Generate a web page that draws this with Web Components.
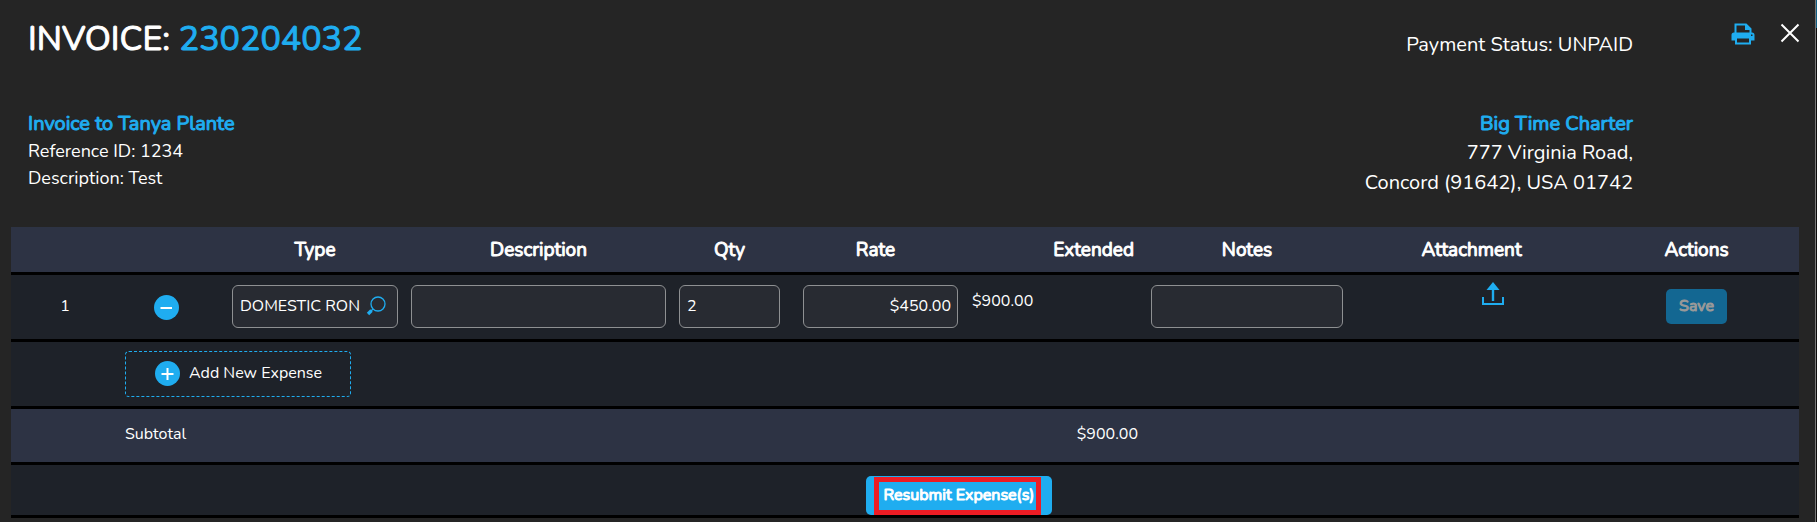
<!DOCTYPE html>
<html lang="en">
<head>
<meta charset="UTF-8">
<title>Invoice 230204032</title>
<style>
    body {
        margin: 0;
        background: linear-gradient(#0f5f85 28px, #0b0b0b 28px);
        color: #fff;
        font-family: Nunito, Lato, sans-serif;
        font-size: 16px;
        --accent: #1fadf0;
    }
</style>
</head>
<body>
<invoice-panel>
    <invoice-header slot="header" number="230204032" status="UNPAID"></invoice-header>
    <invoice-party slot="parties" heading="Invoice to Tanya Plante">
        <div>Reference ID: 1234</div>
        <div>Description: Test</div>
    </invoice-party>
    <invoice-party slot="parties" heading="Big Time Charter" align="right">
        <div>777 Virginia Road,</div>
        <div>Concord (91642), USA 01742</div>
    </invoice-party>
    <expense-table></expense-table>
</invoice-panel>

<script>
const ICONS = {
    print: `<svg width="24" height="22" viewBox="0 0 24 22" fill="none">
        <path d="M4.500 10V1.500H15L19.500 6V10" stroke="currentColor" stroke-width="2"/>
        <path d="M14 1L20 7H14Z" fill="currentColor"/>
        <path fill="currentColor" fill-rule="evenodd" d="M3 9.500H21Q23.500 9.500 23.500 12V17.500H.500V12Q.500 9.500 3 9.500ZM20 11.500V13H21.500V11.500Z"/>
        <path d="M5 14.500H19V20.500H5Z" stroke="currentColor" stroke-width="2" fill="#252525"/>
    </svg>`,
    close: `<svg width="20" height="20" viewBox="0 0 20 20" fill="none">
        <path d="M1.500 1.500L18.500 18.500M18.500 1.500L1.500 18.500" stroke="currentColor" stroke-width="2"/>
    </svg>`,
    search: `<svg width="20" height="20" viewBox="0 0 20 20" fill="none">
        <circle cx="12" cy="8" r="7" stroke="currentColor" stroke-width="1.300"/>
        <path d="M6.800 13.200L5 15" stroke="currentColor" stroke-width="1.300"/>
        <path d="M5.500 14.500L2 18" stroke="currentColor" stroke-width="3.400"/>
    </svg>`,
    minus: `<svg width="25" height="25" viewBox="0 0 25 25">
        <circle cx="12.500" cy="12.500" r="12.500" fill="currentColor"/>
        <path d="M6.500 13H18" stroke="#fff" stroke-width="2"/>
    </svg>`,
    plus: `<svg width="25" height="25" viewBox="0 0 25 25">
        <circle cx="12.500" cy="12.500" r="12.500" fill="currentColor"/>
        <path d="M6.500 13H18.500M12.500 7V19" stroke="#fff" stroke-width="2"/>
    </svg>`,
    upload: `<svg width="22" height="24" viewBox="0 0 22 24" fill="none">
        <path d="M1 15V22H21V15" stroke="currentColor" stroke-width="2"/>
        <path d="M11 19V6" stroke="currentColor" stroke-width="2.400"/>
        <path d="M11 0L17.500 8H4.500Z" fill="currentColor"/>
    </svg>`
};

class InvoiceIcon extends HTMLElement {
    connectedCallback() {
        this.attachShadow({ mode: 'open' });
        this.shadowRoot.innerHTML = `
            <style>
                :host { display: block; color: var(--accent); }
                svg { display: block; }
            </style>
            ${ICONS[this.getAttribute('name')]}
        `;
    }
}

class InvoicePanel extends HTMLElement {
    connectedCallback() {
        this.attachShadow({ mode: 'open' });
        this.shadowRoot.innerHTML = `
            <style>
                :host {
                    display: block;
                    box-sizing: border-box;
                    min-height: 100vh;
                    margin-right: 1px;
                    border-right: 1px solid #777;
                    background: #252525;
                }

                .parties {
                    display: flex;
                    justify-content: space-between;
                    padding: 0 182px 29px 28px;
                }

                .content {
                    padding: 0 16px 4px 11px;
                }
            </style>
            <slot name="header"></slot>
            <div class="parties"><slot name="parties"></slot></div>
            <div class="content"><slot></slot></div>
        `;
    }
}

class InvoiceHeader extends HTMLElement {
    connectedCallback() {
        this.attachShadow({ mode: 'open' });
        this.shadowRoot.innerHTML = `
            <style>
                :host {
                    display: flex;
                    padding: 16px 15px 48px 28px;
                }

                h1 {
                    flex: 1;
                    margin: 0;
                    font-size: 34px;
                    line-height: 46px;
                    font-weight: 400;
                    -webkit-text-stroke: 1px;
                }

                h1 span {
                    color: var(--accent);
                }

                .status {
                    padding-top: 14px;
                    font-size: 20px;
                    line-height: 30px;
                }

                .actions {
                    display: flex;
                    justify-content: flex-end;
                    align-items: flex-start;
                    gap: 25px;
                    width: 167px;
                    padding-top: 7px;
                }

                button {
                    padding: 0;
                    border: 0;
                    background: none;
                    cursor: pointer;
                }

                .close {
                    --accent: #fff;
                }
            </style>
            <h1>INVOICE: <span>${this.getAttribute('number')}</span></h1>
            <div class="status">Payment Status: ${this.getAttribute('status')}</div>
            <div class="actions">
                <button aria-label="Print"><invoice-icon name="print"></invoice-icon></button>
                <button class="close" aria-label="Close"><invoice-icon name="close"></invoice-icon></button>
            </div>
        `;
    }
}

class InvoiceParty extends HTMLElement {
    connectedCallback() {
        this.attachShadow({ mode: 'open' });
        this.shadowRoot.innerHTML = `
            <style>
                :host {
                    display: block;
                    font-size: 18px;
                    line-height: 27px;
                }

                :host([align="right"]) {
                    text-align: right;
                    font-size: 20px;
                    line-height: 30px;
                }

                h2 {
                    margin: 0;
                    color: var(--accent);
                    font-size: 20px;
                    line-height: 28px;
                    font-weight: 400;
                    -webkit-text-stroke: 1px;
                }
            </style>
            <h2>${this.getAttribute('heading')}</h2>
            <slot></slot>
        `;
    }
}

class ExpenseTable extends HTMLElement {
    connectedCallback() {
        this.attachShadow({ mode: 'open' });
        this.shadowRoot.innerHTML = `
            <style>
                :host {
                    display: block;
                }

                table {
                    width: 100%;
                    table-layout: fixed;
                    border-collapse: separate;
                    border-spacing: 0;
                }

                th, td {
                    box-sizing: border-box;
                    padding: 0 6px 0 7px;
                    border-bottom: 3px solid #000;
                    background: #1e2229;
                    text-align: left;
                }

                th {
                    height: 48px;
                    background: #2d3344;
                    font-size: 19px;
                    font-weight: 400;
                    text-align: center;
                    -webkit-text-stroke: 1px;
                }

                th.extended {
                    padding-right: 10px;
                    text-align: right;
                }

                .item td { height: 67px; padding-bottom: 2px; }
                .add td { height: 67px; }
                .subtotal td { height: 56px; background: #2d3344; padding-bottom: 4px; }
                .submit td { height: 53px; }

                .item .index { text-align: center; }

                .item .remove {
                    padding-left: 36px;
                    padding-bottom: 0;
                }

                .item .top {
                    vertical-align: top;
                    padding-top: 16px;
                    padding-left: 8px;
                    line-height: 20px;
                }

                .item .attachment {
                    vertical-align: top;
                    padding-top: 7px;
                    padding-left: 50px;
                }

                .item .actions {
                    text-align: center;
                }

                .submit td {
                    padding-top: 11px;
                    vertical-align: top;
                    text-align: center;
                }

                .subtotal .amount {
                    text-align: right;
                }

                .field {
                    display: flex;
                    align-items: center;
                    box-sizing: border-box;
                    height: 43px;
                    padding: 0 7px;
                    border: 1px solid #8e9092;
                    border-radius: 6px;
                    background: #282b32;
                }

                .rate .field {
                    margin-left: 10px;
                    padding: 0 6px;
                }

                input {
                    flex: 1;
                    min-width: 0;
                    width: 100%;
                    padding: 0;
                    border: 0;
                    outline: 0;
                    background: none;
                    color: inherit;
                    font: inherit;
                }

                .rate input {
                    text-align: right;
                }

                button {
                    padding: 0;
                    border: 0;
                    background: none;
                    color: inherit;
                    font: inherit;
                    cursor: pointer;
                }

                .search {
                    margin-right: 4px;
                }

                .remove button {
                    display: block;
                }

                .attachment button {
                    display: block;
                    margin: 0 auto;
                }

                .save {
                    height: 35px;
                    padding: 0 13px;
                    border-radius: 5px;
                    background: #136792;
                    color: #999;
                    vertical-align: middle;
                    -webkit-text-stroke: 1px;
                }

                .new-expense {
                    display: flex;
                    align-items: center;
                    gap: 9px;
                    height: 46px;
                    padding: 0 28px 2px 29px;
                    border: 1px dashed var(--accent);
                    border-radius: 4px;
                }

                .resubmit {
                    position: relative;
                    height: 39px;
                    padding: 0 18px 2px;
                    border-radius: 5px;
                    background: var(--accent);
                    vertical-align: top;
                    -webkit-text-stroke: 1px;
                }

                /* highlight frame drawn over the button */
                .resubmit::after {
                    content: "";
                    position: absolute;
                    inset: 1px 11px 0 8px;
                    border: 5px solid #ed1c24;
                }
            </style>
            <table>
                <colgroup>
                    <col style="width: 107px"><col style="width: 107px"><col style="width: 179px">
                    <col style="width: 268px"><col style="width: 114px"><col style="width: 178px">
                    <col style="width: 180px"><col style="width: 205px"><col style="width: 244px">
                    <col style="width: 206px">
                </colgroup>
                <thead>
                    <tr>
                        <th></th>
                        <th></th>
                        <th id="type">Type</th>
                        <th id="description">Description</th>
                        <th id="qty">Qty</th>
                        <th id="rate">Rate</th>
                        <th class="extended">Extended</th>
                        <th id="notes">Notes</th>
                        <th>Attachment</th>
                        <th>Actions</th>
                    </tr>
                </thead>
                <tbody>
                    <tr class="item">
                        <td class="index">1</td>
                        <td class="remove"><button aria-label="Remove"><invoice-icon name="minus"></invoice-icon></button></td>
                        <td>
                            <div class="field">
                                <input type="text" value="DOMESTIC RON" aria-labelledby="type">
                                <button class="search" aria-label="Search"><invoice-icon name="search"></invoice-icon></button>
                            </div>
                        </td>
                        <td><div class="field"><input type="text" aria-labelledby="description"></div></td>
                        <td><div class="field"><input type="text" value="2" aria-labelledby="qty"></div></td>
                        <td class="rate"><div class="field"><input type="text" value="$450.00" aria-labelledby="rate"></div></td>
                        <td class="top">$900.00</td>
                        <td><div class="field"><input type="text" aria-labelledby="notes"></div></td>
                        <td class="attachment"><button aria-label="Upload"><invoice-icon name="upload"></invoice-icon></button></td>
                        <td class="actions"><button class="save" disabled>Save</button></td>
                    </tr>
                    <tr class="add">
                        <td></td>
                        <td colspan="9">
                            <button class="new-expense"><invoice-icon name="plus"></invoice-icon>Add New Expense</button>
                        </td>
                    </tr>
                    <tr class="subtotal">
                        <td></td>
                        <td colspan="5">Subtotal</td>
                        <td class="amount">$900.00</td>
                        <td colspan="3"></td>
                    </tr>
                    <tr class="submit">
                        <td></td>
                        <td colspan="9"><button class="resubmit">Resubmit Expense(s)</button></td>
                    </tr>
                </tbody>
            </table>
        `;
    }
}

customElements.define('invoice-icon', InvoiceIcon);
customElements.define('invoice-panel', InvoicePanel);
customElements.define('invoice-header', InvoiceHeader);
customElements.define('invoice-party', InvoiceParty);
customElements.define('expense-table', ExpenseTable);
</script>
</body>
</html>
